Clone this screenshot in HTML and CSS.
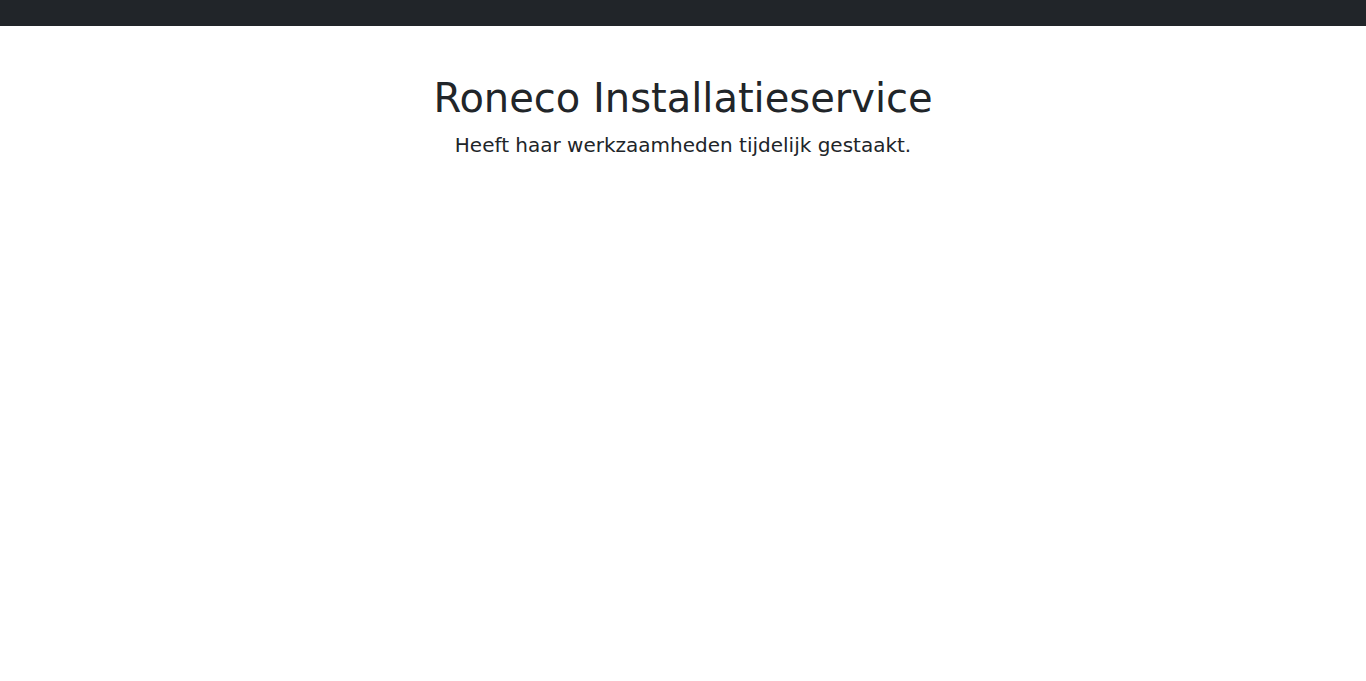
FILE: index.html
```html
<!DOCTYPE html>
<html lang="nl">
  <head>
    <meta charset="UTF-8" />
    <meta name="viewport" content="width=device-width, initial-scale=1.0" />
    <title>Roneco Installatieservice</title>
    <link rel="stylesheet" href="styles.css">
  </head>
  <body>
    <nav class="navbar"></nav>
    <main class="container">
      <h1 class="title">Roneco Installatieservice</h1>
      <p class="lead">Heeft haar werkzaamheden tijdelijk gestaakt.</p>
    </main>
  </body>
</html>
```

FILE: styles.css
```css
html {
  font-size: 16px;
}
body {
  margin: 0;
  font-family: "DejaVu Sans", sans-serif;
  color: #212529;
  background-color: #fff;
}
.navbar {
  height: 26px;
  background-color: #212529;
}
.container {
  max-width: 1140px;
  margin: 0 auto;
  padding: 48px 12px 0;
  text-align: center;
}
.title {
  margin: 0 0 8px;
  font-size: 2.5rem;
  font-weight: 500;
  line-height: 1.2;
}
.lead {
  margin: 0;
  font-size: 1.25rem;
  font-weight: 400;
  line-height: 1.5;
}
```
